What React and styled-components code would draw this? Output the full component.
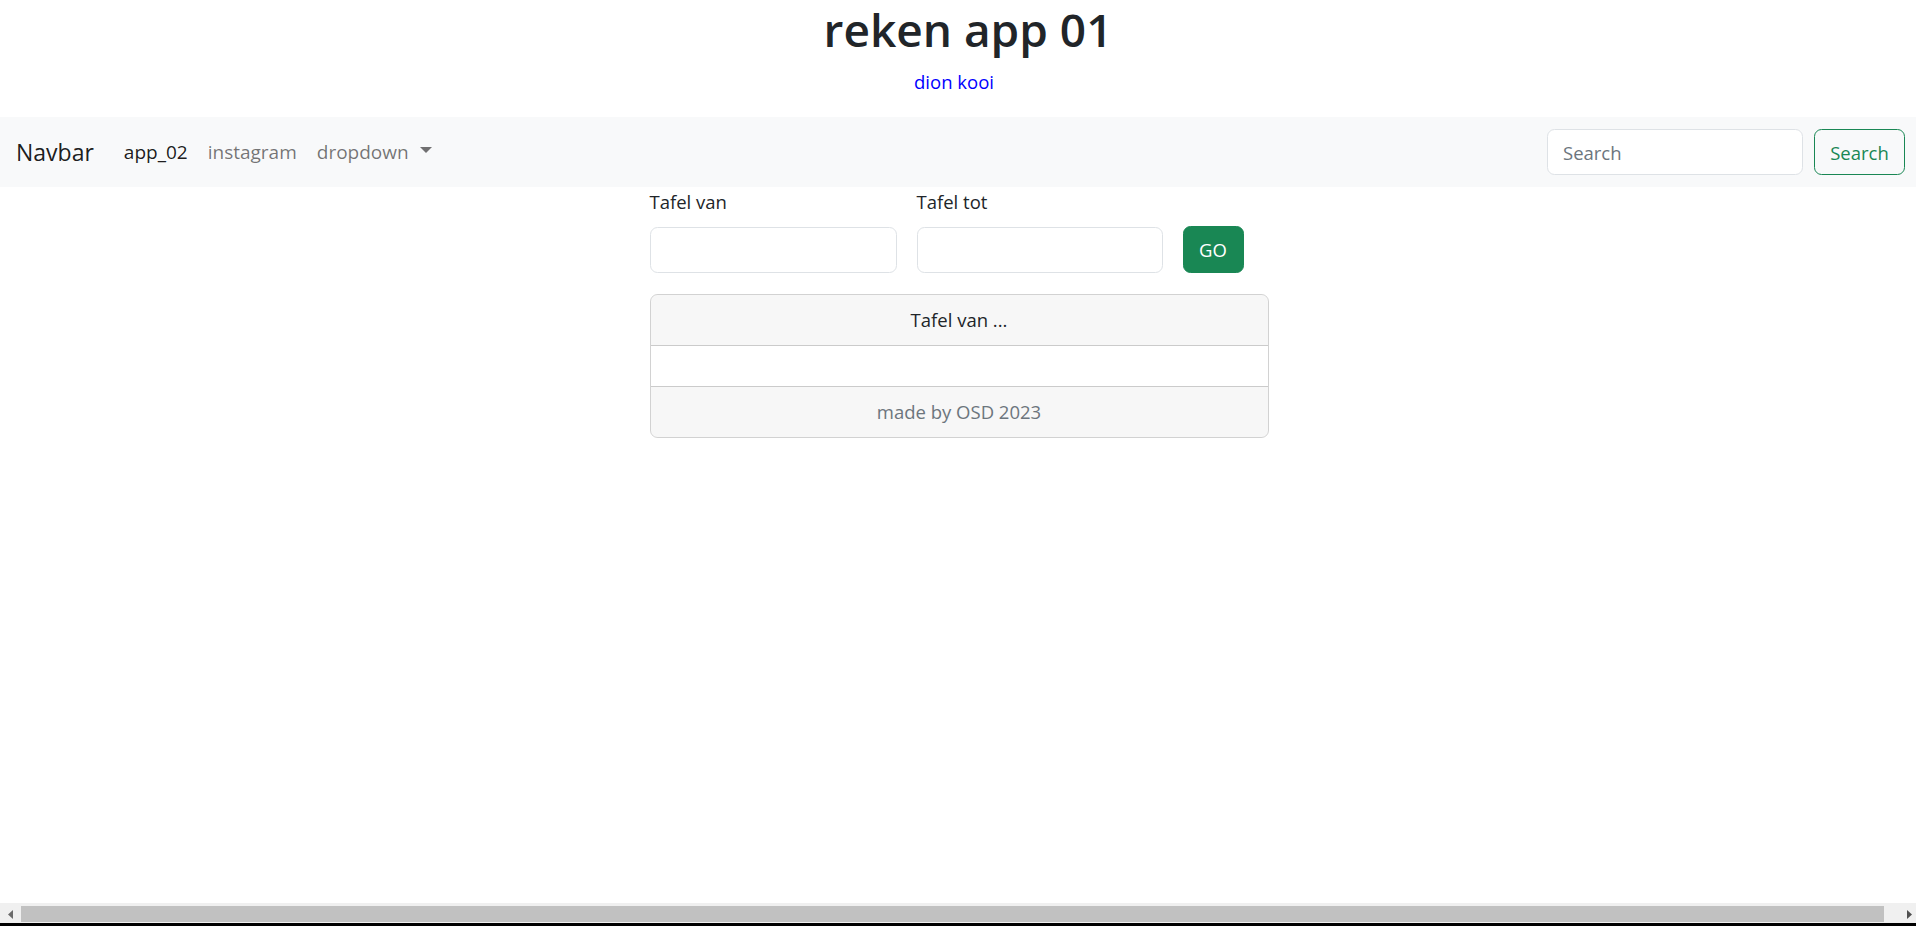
import React from 'react';
import styled, { createGlobalStyle } from 'styled-components';

const GlobalStyle = createGlobalStyle`
  html, body {
    margin: 0;
    padding: 0;
    background: #fff;
  }
  body {
    font-family: "Open Sans", "Noto Sans", sans-serif;
    font-size: 18.5px;
    line-height: 1.5;
    color: #212529;
    overflow: hidden;
  }
  * {
    box-sizing: border-box;
  }
`;

const App = () => {
  return (
    <>
      <GlobalStyle />
      <Page>
        <Header>
          <Title>reken app 01</Title>
          <Author>dion kooi</Author>
        </Header>

        <Navbar>
          <Brand href="#">Navbar</Brand>
          <NavList>
            <NavLink href="#" active>app_02</NavLink>
            <NavLink href="#">instagram</NavLink>
            <DropdownToggle href="#">dropdown</DropdownToggle>
          </NavList>
          <SearchForm onSubmit={(e) => e.preventDefault()}>
            <SearchInput type="search" placeholder="Search" />
            <OutlineButton type="submit">Search</OutlineButton>
          </SearchForm>
        </Navbar>

        <Main>
          <FormRow>
            <Field width="247px">
              <Label>Tafel van</Label>
              <Input type="text" />
            </Field>
            <Field width="246px">
              <Label>Tafel tot</Label>
              <Input type="text" />
            </Field>
            <GoButton type="button">GO</GoButton>
          </FormRow>

          <Card>
            <CardHeader>Tafel van ...</CardHeader>
            <CardBody />
            <CardFooter>made by OSD 2023</CardFooter>
          </Card>
        </Main>
      </Page>

      {/* horizontale scrollbar onderaan */}
      <Scrollbar>
        <Track>
          <ArrowBox>
            <svg width="5" height="9" viewBox="0 0 5 9">
              <polygon points="5,0 0,4.5 5,9" fill="#6b6b6b" />
            </svg>
          </ArrowBox>
          <Thumb />
          <ArrowBox end>
            <svg width="5" height="9" viewBox="0 0 5 9">
              <polygon points="0,0 5,4.5 0,9" fill="#505050" />
            </svg>
          </ArrowBox>
        </Track>
        <BottomEdge />
      </Scrollbar>
    </>
  );
};

export default App;

const Page = styled.div`
  min-height: 100vh;
`;

const Header = styled.header`
  height: 117px;
  display: flex;
  flex-direction: column;
  align-items: center;
  padding-top: 2px;
`;

const Title = styled.h1`
  margin: 0;
  padding-left: 20px;
  font-size: 46px;
  font-weight: 600;
  line-height: 1.2;
  color: #212529;
`;

const Author = styled.p`
  margin: 11px 0 0;
  padding-right: 8px;
  color: #0000ff;
  font-size: 18.5px;
`;

const Navbar = styled.nav`
  height: 70px;
  display: flex;
  align-items: center;
  padding: 0 11px 0 16px;
  background: #f8f9fa;
`;

const Brand = styled.a`
  font-size: 23px;
  color: rgba(0, 0, 0, 0.9);
  text-decoration: none;
  margin-right: 20px;
`;

const NavList = styled.div`
  display: flex;
  align-items: center;
  flex: 1;
`;

const NavLink = styled.a`
  padding: 0 10px;
  font-size: 19px;
  color: ${(p) => (p.active ? 'rgba(0, 0, 0, 0.9)' : 'rgba(0, 0, 0, 0.55)')};
  text-decoration: none;
`;

const DropdownToggle = styled(NavLink)`
  &::after {
    content: '';
    display: inline-block;
    margin-left: 11px;
    vertical-align: 0.3em;
    border-top: 6px solid;
    border-right: 6px solid transparent;
    border-left: 6px solid transparent;
    border-bottom: 0;
  }
`;

const SearchForm = styled.form`
  display: flex;
  align-items: center;
  gap: 11px;
`;

const SearchInput = styled.input`
  width: 256px;
  height: 46px;
  padding: 0 15px;
  font-family: inherit;
  font-size: 18.5px;
  color: #212529;
  background: #fff;
  border: 1px solid #dee2e6;
  border-radius: 7.5px;
  outline: none;

  &::placeholder {
    color: #6c757d;
  }
`;

const OutlineButton = styled.button`
  width: 91px;
  height: 46px;
  font-family: inherit;
  font-size: 18.5px;
  color: #198754;
  background: transparent;
  border: 1px solid #198754;
  border-radius: 7.5px;
  cursor: pointer;
`;

const Main = styled.main`
  width: 621px;
  margin: 0 auto;
  padding-left: 2px;
`;

const FormRow = styled.div`
  display: flex;
  align-items: flex-end;
  gap: 20px;
`;

const Field = styled.div`
  display: flex;
  flex-direction: column;
  width: ${(p) => p.width};
`;

const Label = styled.label`
  line-height: 30px;
  margin-bottom: 10px;
`;

const Input = styled.input`
  width: 100%;
  height: 46px;
  padding: 0 15px;
  font-family: inherit;
  font-size: 18.5px;
  border: 1px solid #dee2e6;
  border-radius: 7.5px;
  outline: none;
`;

const GoButton = styled.button`
  width: 61px;
  height: 47px;
  font-family: inherit;
  font-size: 18.5px;
  color: #fff;
  background: #198754;
  border: 1px solid #198754;
  border-radius: 7.5px;
  cursor: pointer;
`;

const Card = styled.div`
  margin-top: 21px;
  border: 1px solid rgba(0, 0, 0, 0.175);
  border-radius: 7.5px;
  overflow: hidden;
`;

const CardHeader = styled.div`
  padding: 10px 20px;
  line-height: 30px;
  text-align: center;
  background: rgba(0, 0, 0, 0.03);
  border-bottom: 1px solid rgba(0, 0, 0, 0.175);
`;

const CardBody = styled.div`
  height: 40px;
`;

const CardFooter = styled.div`
  padding: 10px 20px;
  line-height: 30px;
  text-align: center;
  color: #6c757d;
  background: rgba(0, 0, 0, 0.03);
  border-top: 1px solid rgba(0, 0, 0, 0.175);
`;

const Scrollbar = styled.div`
  position: fixed;
  left: 0;
  right: 0;
  bottom: 0;
`;

const Track = styled.div`
  height: 20px;
  display: flex;
  align-items: stretch;
  background: #f0f0f0;
  padding: 3px 0 1px;
`;

const ArrowBox = styled.div`
  width: ${(p) => (p.end ? '32px' : '21px')};
  display: flex;
  align-items: center;
  justify-content: ${(p) => (p.end ? 'flex-end' : 'center')};
  padding-right: ${(p) => (p.end ? '4px' : '0')};
`;

const Thumb = styled.div`
  flex: 1;
  background: #c1c1c1;
`;

const BottomEdge = styled.div`
  height: 3px;
  background: #000;
`;
